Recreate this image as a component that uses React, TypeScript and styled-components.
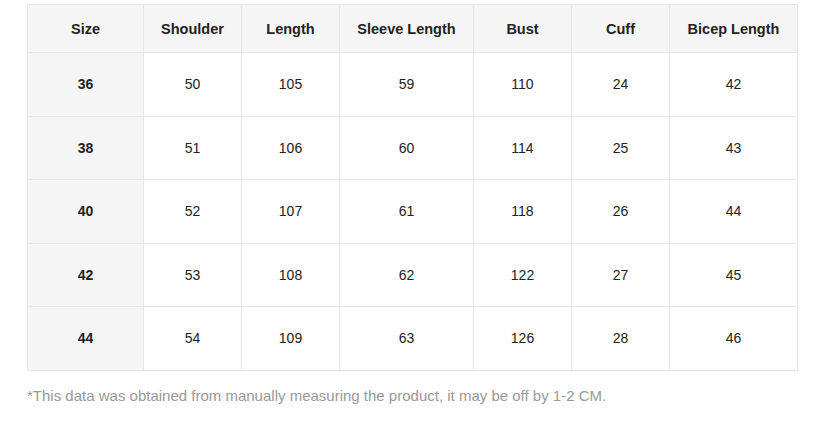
import React from "react";
import styled, { createGlobalStyle } from "styled-components";

const Global = createGlobalStyle`
  html, body { margin: 0; padding: 0; background: #fff; }
  body { font-family: "Liberation Sans", Arial, sans-serif; }
`;

const Wrap = styled.div`
  padding: 4px 22px 0 27px;
  width: 770px;
`;

const Table = styled.table`
  width: 770px;
  border-collapse: collapse;
  table-layout: fixed;
  font-size: 14px;
  color: #222;
`;

const HeadCell = styled.th`
  height: 47px;
  background: #f5f5f5;
  border: 1px solid #e6e6e6;
  font-weight: 700;
  font-size: 14.5px;
  text-align: center;
  padding: 0;
  color: #222;
`;

const Cell = styled.td<{ $label?: boolean }>`
  height: 62.5px;
  border: 1px solid #e6e6e6;
  text-align: center;
  padding: 0;
  background: ${(p) => (p.$label ? "#f5f5f5" : "#fff")};
  font-weight: ${(p) => (p.$label ? 700 : 400)};
  color: #222;
`;

const Note = styled.p`
  margin: 15px 0 0;
  font-size: 15px;
  line-height: 20px;
  color: #999;
`;

const widths = [116, 98, 98, 134, 98, 98, 128];
const headers = ["Size", "Shoulder", "Length", "Sleeve Length", "Bust", "Cuff", "Bicep Length"];
const rows = [
  ["36", "50", "105", "59", "110", "24", "42"],
  ["38", "51", "106", "60", "114", "25", "43"],
  ["40", "52", "107", "61", "118", "26", "44"],
  ["42", "53", "108", "62", "122", "27", "45"],
  ["44", "54", "109", "63", "126", "28", "46"],
];

export default function App() {
  return (
    <>
      <Global />
      <Wrap>
        <Table>
          <colgroup>
            {widths.map((w, i) => (
              <col key={i} style={{ width: w }} />
            ))}
          </colgroup>
          <thead>
            <tr>
              {headers.map((h) => (
                <HeadCell key={h}>{h}</HeadCell>
              ))}
            </tr>
          </thead>
          <tbody>
            {rows.map((r) => (
              <tr key={r[0]}>
                {r.map((c, i) => (
                  <Cell key={i} $label={i === 0}>
                    {c}
                  </Cell>
                ))}
              </tr>
            ))}
          </tbody>
        </Table>
        <Note>*This data was obtained from manually measuring the product, it may be off by 1-2 CM.</Note>
      </Wrap>
    </>
  );
}
